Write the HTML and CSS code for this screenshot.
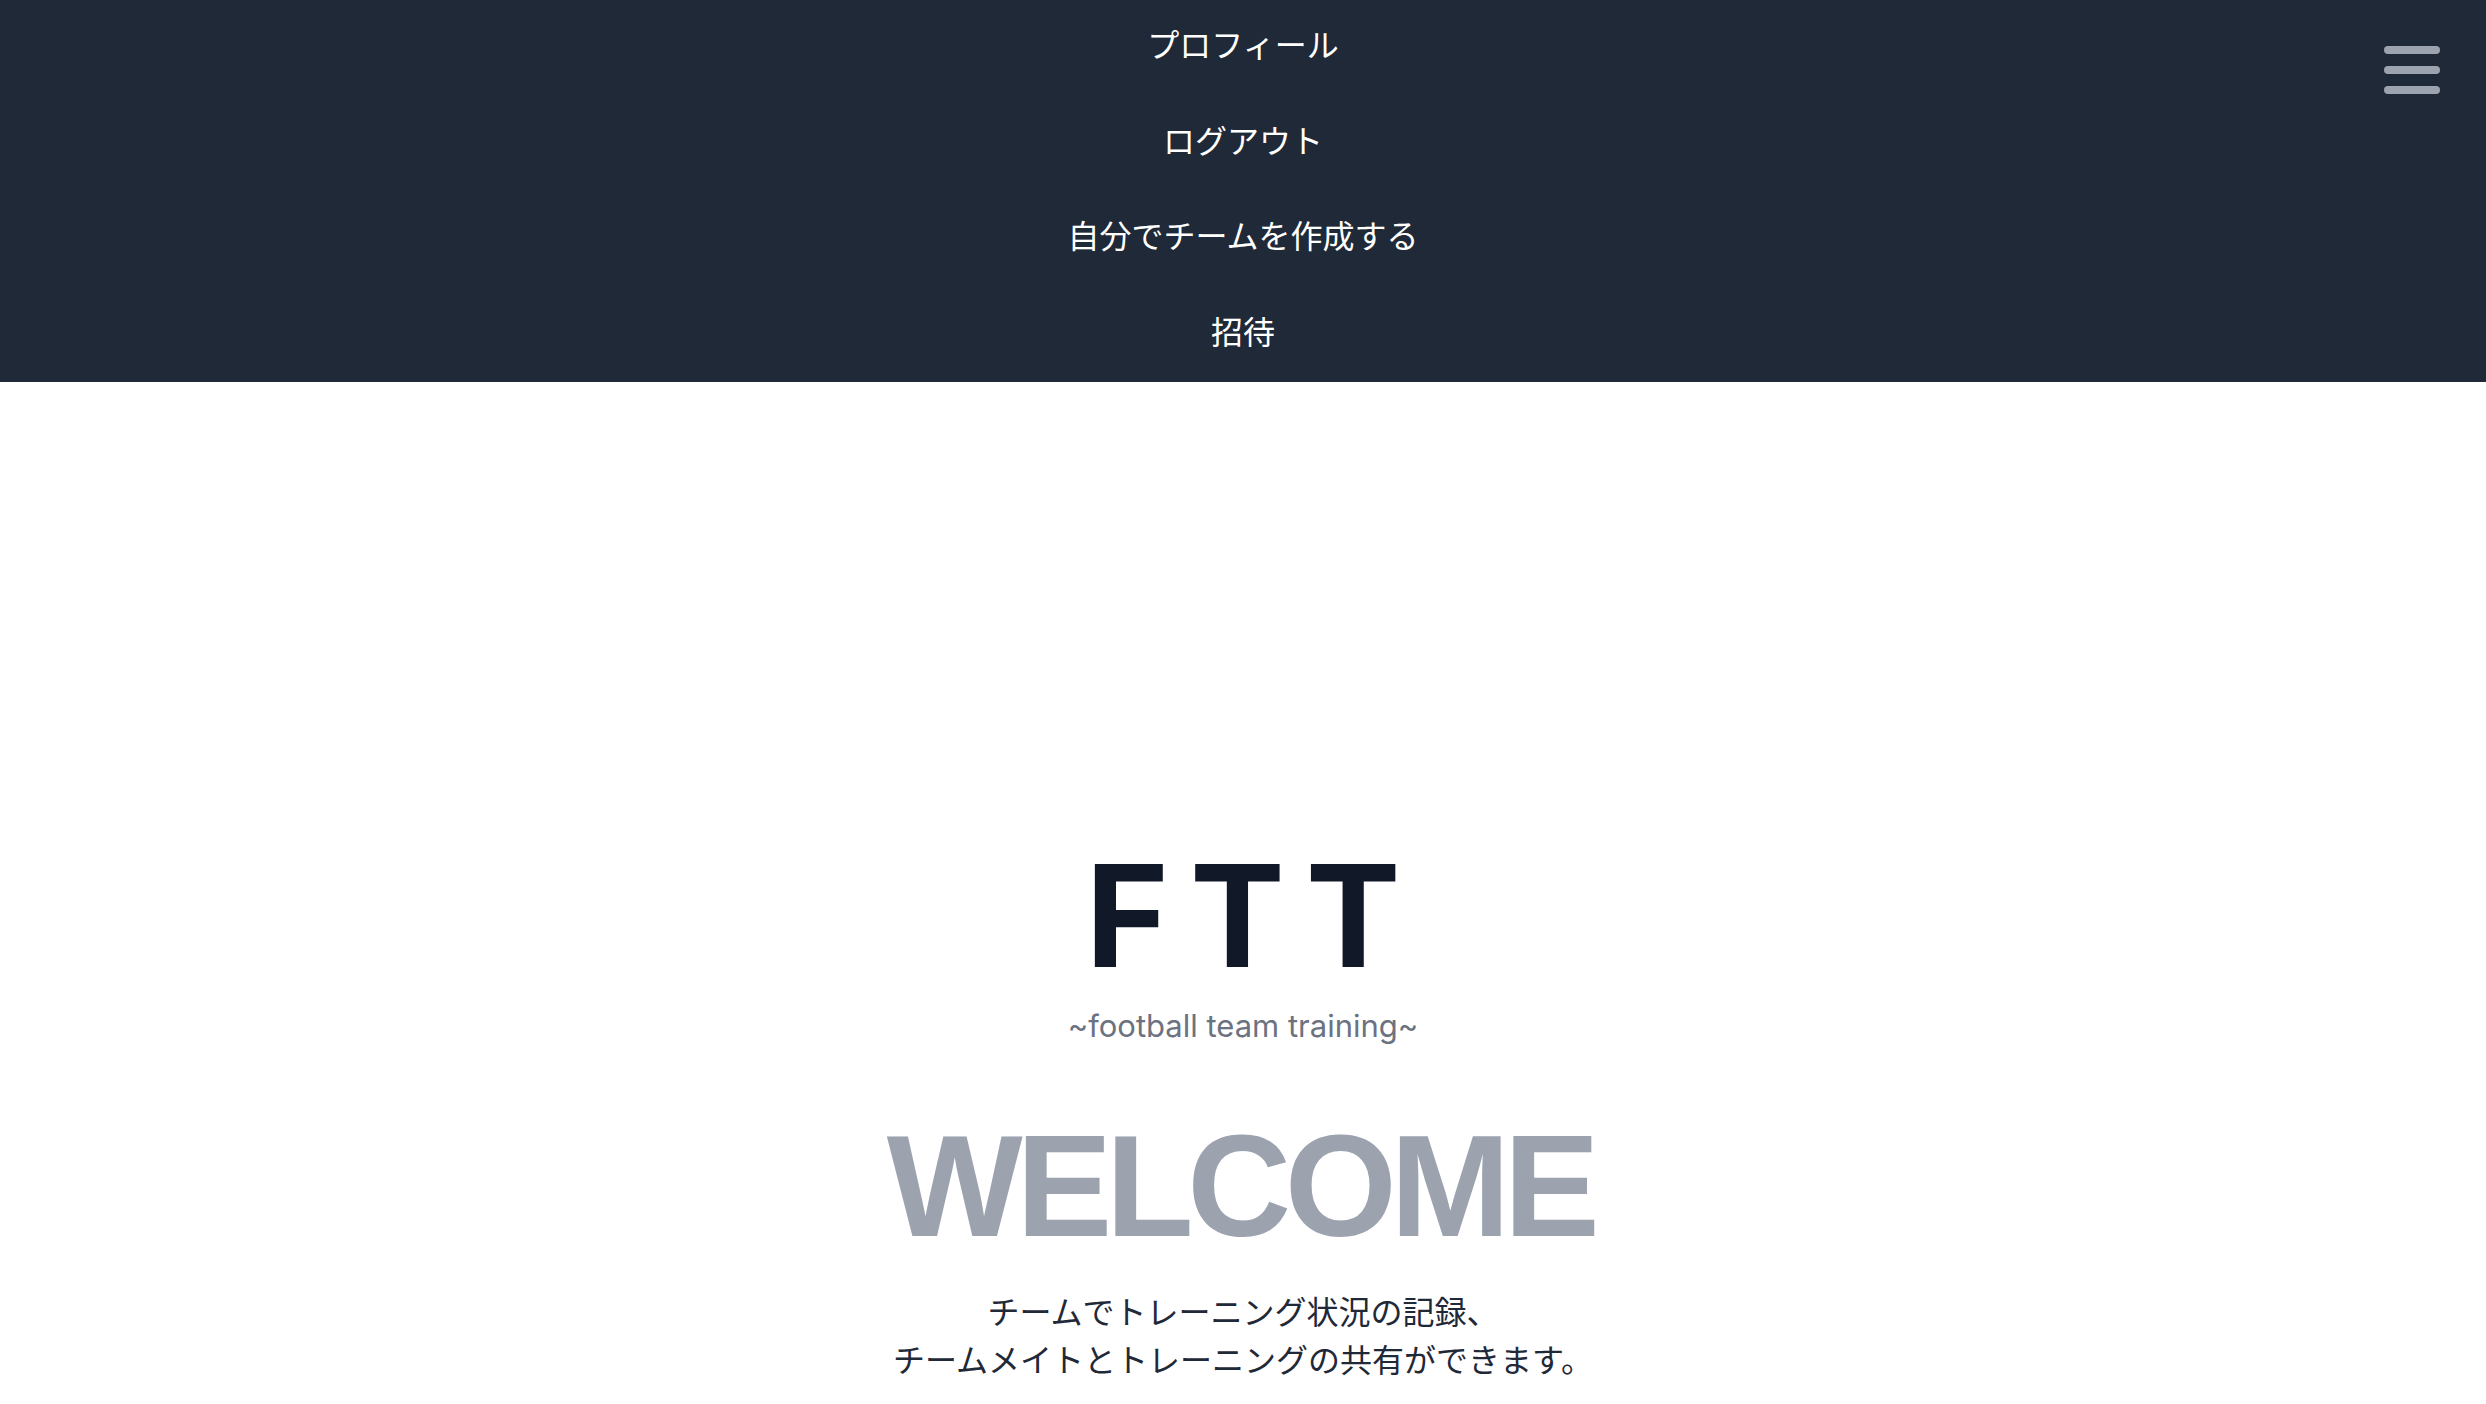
FILE: index.html
```html
<!DOCTYPE html>
<html lang="ja">
<head>
<meta charset="utf-8">
<title>FTT</title>
<link rel="stylesheet" href="styles.css">
</head>
<body>
<header class="nav">
  <div class="nav-spacer"></div>
  <ul class="menu">
    <li class="menu-item"><a href="#">プロフィール</a></li>
    <li class="menu-item"><a href="#">ログアウト</a></li>
    <li class="menu-item"><a href="#">自分でチームを作成する</a></li>
    <li class="menu-item"><a href="#">招待</a></li>
  </ul>
  <div class="nav-side">
    <button class="burger" aria-label="menu">
      <span class="bar"></span>
      <span class="bar"></span>
      <span class="bar"></span>
    </button>
  </div>
</header>
<main class="hero">
  <h1 class="logo">FTT</h1>
  <p class="tagline">~football team training~</p>
  <h2 class="welcome">WELCOME</h2>
  <p class="lead">チームでトレーニング状況の記録、<br>チームメイトとトレーニングの共有ができます。</p>
</main>
</body>
</html>
```
FILE: styles.css
```css
html, body {
  margin: 0;
  padding: 0;
}
body {
  background: #ffffff;
  font-family: "Inter", "Noto Sans CJK JP", sans-serif;
  overflow: hidden;
}
.nav {
  background: #1f2937;
  height: 382px;
  display: grid;
  grid-template-columns: 1fr auto 1fr;
}
.menu {
  list-style: none;
  margin: 0;
  padding: 0;
  display: flex;
  flex-direction: column;
  align-items: center;
}
.menu-item {
  box-sizing: border-box;
  height: 95.5px;
  padding-bottom: 9px;
  display: flex;
  align-items: center;
  justify-content: center;
}
.menu-item a {
  color: #ffffff;
  text-decoration: none;
  font-family: "Noto Sans CJK JP", sans-serif;
  font-size: 32px;
  line-height: 44px;
}
.nav-side {
  display: flex;
  justify-content: flex-end;
  align-items: flex-start;
  padding: 46px 46px 0 0;
}
.burger {
  background: none;
  border: 0;
  padding: 0;
  display: flex;
  flex-direction: column;
  gap: 12px;
  cursor: pointer;
}
.bar {
  display: block;
  width: 56px;
  height: 8px;
  border-radius: 4px;
  background: #9ca3af;
}
.hero {
  display: flex;
  flex-direction: column;
  align-items: center;
  padding-top: 462px;
}
.logo {
  margin: 0;
  font-family: "Inter", sans-serif;
  font-weight: 700;
  font-size: 142px;
  line-height: 142px;
  letter-spacing: 21px;
  margin-right: -21px;
  color: #111827;
}
.tagline {
  margin: 20px 0 0;
  font-family: "Inter", sans-serif;
  font-size: 31px;
  line-height: 40px;
  color: #6b7280;
}
.welcome {
  margin: 69px 6px 0 0;
  font-family: "Liberation Sans", Arial, sans-serif;
  font-weight: 700;
  font-size: 144px;
  line-height: 144px;
  letter-spacing: -6.5px;
  color: #9ca3af;
}
.lead {
  margin: 28px 0 0;
  font-family: "Noto Sans CJK JP", sans-serif;
  font-size: 32px;
  line-height: 47.5px;
  text-align: center;
  color: #1f2937;
}
```
